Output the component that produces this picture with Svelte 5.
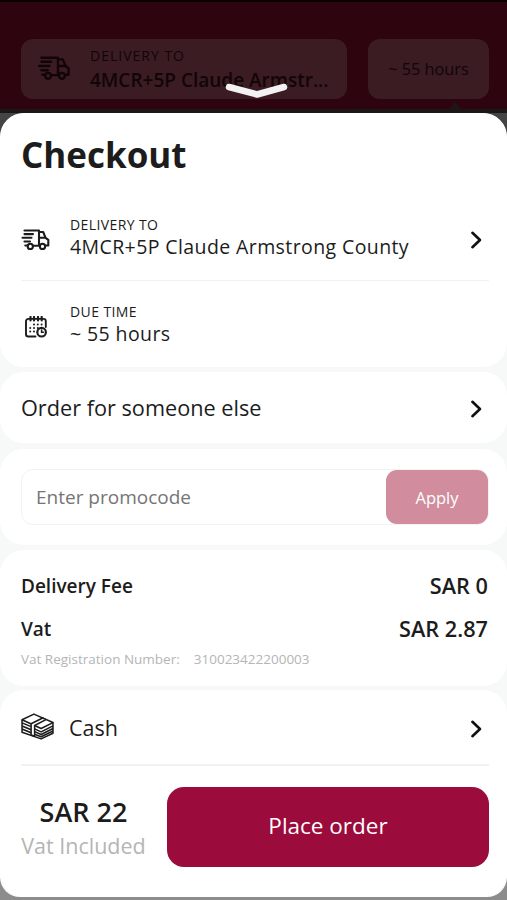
<script lang="ts">
  const address = '4MCR+5P Claude Armstrong County';
  const dueTime = '~ 55 hours';

  let promocode = $state('');
</script>

{#snippet truck()}
  <svg class="truck" viewBox="0 0 28 22" fill="none" stroke="currentColor" stroke-width="2.1" stroke-linecap="round" stroke-linejoin="round">
    <path d="M3 1.5h14.5v15M17.5 3h4.2l2.4 5.8 2.7 2v5.7h-2.4M18 8.8h6M18 16.8h-6M3.8 16.5h2" />
    <path d="M3 5.1h8.5M1 8.8h9M3 12.5h5.5" />
    <circle cx="8.8" cy="17.4" r="2.6" />
    <circle cx="21" cy="17.4" r="2.6" />
  </svg>
{/snippet}

{#snippet chevron()}
  <svg class="chevron" viewBox="0 0 12 20" fill="none" stroke="currentColor" stroke-width="2.6" stroke-linecap="round" stroke-linejoin="round">
    <path d="M2.4 2.8 10 10l-7.6 7.2" />
  </svg>
{/snippet}

<div class="screen">
  <header class="backdrop">
    <div class="chip chip-address">
      {@render truck()}
      <div class="chip-text">
        <span class="chip-label">DELIVERY TO</span>
        <span class="chip-value">4MCR+5P Claude Armstr...</span>
      </div>
    </div>
    <div class="chip chip-time">{dueTime}</div>
    <span class="notch"></span>
    <svg class="handle" viewBox="0 0 64 18" fill="none" stroke="#f3f1f1" stroke-width="6.5" stroke-linecap="round" stroke-linejoin="round">
      <path d="M4 6 32 13.5 59 6" />
    </svg>
  </header>

  <main class="sheet">
    <section class="card details">
      <h1>Checkout</h1>
      <div class="row">
        <span class="icon">{@render truck()}</span>
        <div class="info">
          <span class="label">DELIVERY TO</span>
          <span class="value">{address}</span>
        </div>
        {@render chevron()}
      </div>
      <div class="row due">
        <span class="icon">
          <svg class="calendar" viewBox="0 0 22 22" fill="none" stroke="currentColor" stroke-width="1.9" stroke-linecap="round">
            <path d="M10.5 20.5H3.3A2.3 2.3 0 0 1 1 18.2V5.2A2.3 2.3 0 0 1 3.3 2.9h15.2a2.3 2.3 0 0 1 2.3 2.3V11" />
            <path d="M5.5 1v3.4M9 1v3.4M13 1v3.4M16.7 1v3.4" stroke-width="2.2" />
            <path d="M9 8.6h.01M12.8 8.6h.01M16.6 8.6h.01M5.2 12h.01M9 12h.01M12.8 12h.01M5.2 15.5h.01M9 15.5h.01" stroke-width="2" />
            <circle cx="16.6" cy="16.2" r="4.3" stroke-width="2.2" />
            <path d="M16.6 14v2.2h1.8" stroke-width="1.5" />
          </svg>
        </span>
        <div class="info">
          <span class="label">DUE TIME</span>
          <span class="value">{dueTime}</span>
        </div>
      </div>
    </section>

    <section class="card someone">
      <span>Order for someone else</span>
      {@render chevron()}
    </section>

    <section class="card promo">
      <div class="field">
        <input type="text" placeholder="Enter promocode" bind:value={promocode} />
        <button class="apply">Apply</button>
      </div>
    </section>

    <section class="card fees">
      <div class="fee">
        <span>Delivery Fee</span>
        <span class="amount">SAR 0</span>
      </div>
      <div class="fee">
        <span>Vat</span>
        <span class="amount">SAR 2.87</span>
      </div>
      <div class="registration">
        <span>Vat Registration Number:</span>
        <span>310023422200003</span>
      </div>
    </section>

    <section class="card payment">
      <div class="method">
        <svg class="cash" viewBox="0 0 32 26" fill="none" stroke="currentColor" stroke-width="1.5" stroke-linejoin="round">
          <path d="M1 6.5 12.5 1 31 9.2 19.5 15z" />
          <path d="M1 6.5v12L19.5 25 31 19.5V9.2M1 9.5l8.8 3.6M1 12.5l8.8 3.6M1 15.5l8.8 3.6M13.2 15.3l6.3 2.9L31 12.4M13.2 18l6.3 2.8L31 15M13.2 20.6l6.3 2.4L31 17.4" />
          <path d="M9.8 10.3 21 4.8l3.2 1.5L13.2 12v10.4l-3.4-1.2z" fill="#fff" />
        </svg>
        <span>Cash</span>
        {@render chevron()}
      </div>
      <div class="order">
        <div class="total">
          <strong>SAR 22</strong>
          <span>Vat Included</span>
        </div>
        <button class="place">Place order</button>
      </div>
    </section>
  </main>
</div>

<style>
  :global(body) {
    background: #8c8c8c;
  }

  .screen {
    height: 900px;
    display: flex;
    flex-direction: column;
    overflow: hidden;
    background: linear-gradient(#444 0 200px, #8c8c8c 200px);
    color: #1c1c1c;
    font-family: 'Open Sans', 'Noto Sans', sans-serif;
  }

  .backdrop {
    position: relative;
    box-sizing: border-box;
    flex: none;
    display: flex;
    align-items: flex-start;
    gap: 21px;
    height: 113px;
    padding: 37px 18px 0 21px;
    background: #2e040f;
    border-top: 2px solid #080003;
    border-bottom: 4px solid #1c1716;
    color: #110508;
  }

  .chip {
    box-sizing: border-box;
    display: flex;
    align-items: center;
    height: 60px;
    border-radius: 12px;
    background: #3b1c23;
  }

  .chip-address {
    width: 326px;
    padding-left: 17px;
    gap: 20px;
  }

  .chip-address .truck {
    width: 32px;
    height: 25px;
    margin-top: -2px;
  }

  .chip-text {
    display: flex;
    flex-direction: column;
    white-space: nowrap;
  }

  .chip-label {
    font-size: 14px;
    line-height: 22px;
    letter-spacing: 1px;
  }

  .chip-value {
    font-size: 19px;
    font-weight: 600;
    line-height: 26px;
  }

  .chip-time {
    flex: 1;
    justify-content: center;
    font-size: 16.3px;
  }

  .notch {
    position: absolute;
    right: 43px;
    bottom: -4px;
    border: 9px solid transparent;
    border-bottom: 11px solid #1c1716;
    border-top: 0;
  }

  .handle {
    position: absolute;
    left: 225px;
    top: 79px;
    width: 64px;
    height: 18px;
  }

  .sheet {
    flex: none;
    display: flex;
    flex-direction: column;
    height: 784px;
    background: #f7f9f9;
    border-radius: 24px 24px 20px 20px;
    overflow: hidden;
  }

  .card {
    box-sizing: border-box;
    flex: none;
    padding: 0 18px 0 21px;
    background: #fff;
    border-radius: 24px;
  }

  .details {
    height: 254px;
    padding-top: 22px;
    margin-bottom: 5px;
  }

  h1 {
    margin: 0 0 19px;
    font-size: 35px;
    font-weight: 700;
    line-height: 40px;
  }

  .row {
    display: flex;
    align-items: center;
    height: 86px;
    border-bottom: 1px solid #f1f1f1;
  }

  .due {
    border-bottom: 0;
  }

  .icon {
    display: flex;
    width: 49px;
    padding-top: 6px;
  }

  .icon .truck {
    width: 29px;
    height: 22px;
  }

  .calendar {
    width: 22px;
    height: 22px;
    margin-left: 4px;
  }

  .info {
    flex: 1;
    display: flex;
    flex-direction: column;
  }

  .label {
    font-size: 14px;
    line-height: 18px;
    letter-spacing: 0.4px;
  }

  .value {
    font-size: 19.5px;
    line-height: 25px;
    letter-spacing: 0.4px;
  }

  .chevron {
    width: 12px;
    height: 20px;
    margin-right: 7px;
    margin-top: 3px;
    color: #111;
  }

  .row .chevron {
    margin-top: 5px;
  }

  .someone {
    display: flex;
    align-items: center;
    justify-content: space-between;
    height: 71px;
    margin-bottom: 6px;
    font-size: 21.7px;
  }

  .promo {
    height: 96px;
    padding-top: 20px;
    margin-bottom: 5px;
  }

  .field {
    box-sizing: border-box;
    display: flex;
    align-items: center;
    height: 56px;
    border: 1px solid #f1f2f2;
    border-radius: 12px;
  }

  input {
    flex: 1;
    min-width: 0;
    padding: 0 14px;
    border: 0;
    outline: 0;
    background: none;
    font: 19px 'Open Sans', 'Noto Sans', sans-serif;
  }

  input::placeholder {
    color: #757575;
    opacity: 1;
  }

  button {
    padding: 0;
    border: 0;
    color: #fff;
    font-family: inherit;
    cursor: pointer;
  }

  .apply {
    width: 102px;
    height: 54px;
    border-radius: 11px;
    background: #d18d9d;
    font-size: 16.5px;
    font-weight: 500;
  }

  .fees {
    height: 136px;
    padding-top: 14px;
    margin-bottom: 4px;
  }

  .fee {
    display: flex;
    align-items: center;
    justify-content: space-between;
    height: 43px;
    padding-right: 1px;
    font-size: 19px;
    font-weight: 600;
  }

  .amount {
    font-size: 21.7px;
  }

  .registration {
    display: flex;
    gap: 14px;
    color: #b5b5b5;
    font-size: 13.5px;
    line-height: 18px;
  }

  .payment {
    height: 207px;
  }

  .method {
    box-sizing: border-box;
    display: flex;
    align-items: center;
    height: 76px;
    border-bottom: 2px solid #f1f1f1;
    font-size: 21.5px;
  }

  .method span {
    flex: 1;
  }

  .cash {
    width: 33px;
    height: 27px;
    margin-top: -2px;
    margin-right: 15px;
  }

  .order {
    display: flex;
    align-items: center;
    justify-content: space-between;
    margin-top: 21px;
  }

  .total {
    display: flex;
    flex-direction: column;
    align-items: center;
    width: 125px;
    padding-top: 3px;
    white-space: nowrap;
  }

  .total strong {
    font-size: 27px;
    font-weight: 600;
    line-height: 34px;
  }

  .total span {
    color: #b5b5b5;
    font-size: 21.5px;
    line-height: 33px;
  }

  .place {
    width: 322px;
    height: 80px;
    padding-bottom: 3px;
    border-radius: 17px;
    background: #9b0b3b;
    font-size: 22.5px;
    font-weight: 500;
  }
</style>
